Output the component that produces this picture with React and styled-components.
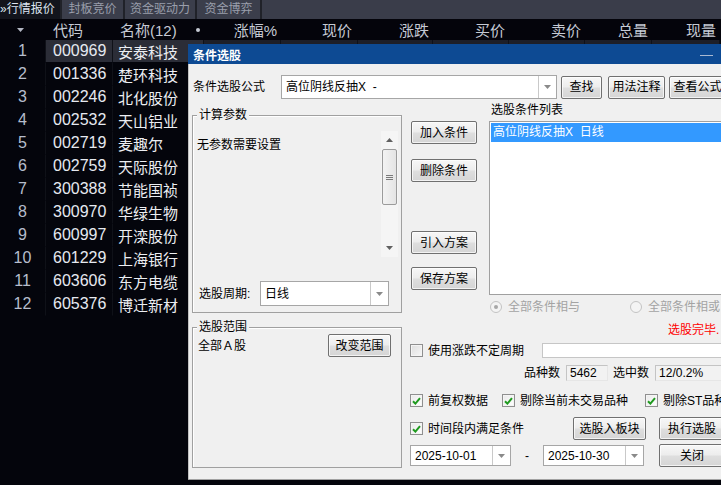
import React from "react";
import styled, { createGlobalStyle } from "styled-components";

const SANS = '"Liberation Sans", "Noto Sans CJK SC", sans-serif';

const GlobalStyle = createGlobalStyle`
  html, body { margin: 0; padding: 0; background: #04050c; overflow: hidden; }
  * { box-sizing: border-box; }
`;

const Screen = styled.div`
  position: relative;
  width: 721px;
  height: 485px;
  overflow: hidden;
  background: #04050c;
  font-family: ${SANS};
`;

/* ---------- market table ---------- */
const TabBar = styled.div`
  display: flex;
  height: 19px;
  background: #3a3d4a;
`;
const Tab = styled.div`
  width: ${(p) => p.$w}px;
  height: 19px;
  display: flex;
  align-items: center;
  justify-content: ${(p) => (p.$active ? "flex-start" : "center")};
  font-size: 12px;
  line-height: 19px;
  color: ${(p) => (p.$active ? "#dde4f0" : "#9a9eab")};
  background: ${(p) => (p.$active ? "#12141c" : "#3b3e4b")};
  border-right: 2px solid #202229;
  white-space: nowrap;
`;

const COLS = "46px 67px 91px 77px 77px 75px 76px 76px 67px 68px";

const HeaderRow = styled.div`
  display: grid;
  grid-template-columns: ${COLS};
  height: 21px;
  background: #04040b;
  color: #c6cad4;
  font-size: 15px;
`;
const HeadCell = styled.div`
  display: flex;
  align-items: center;
  justify-content: ${(p) => p.$justify || "flex-end"};
  padding: ${(p) => p.$pad || "0 4px 0 0"};
  white-space: nowrap;
`;
const Dot = styled.span`
  width: 4px;
  height: 4px;
  border-radius: 50%;
  background: #c6cad4;
`;

const DataRow = styled.div`
  display: grid;
  grid-template-columns: ${COLS};
  height: 23px;
`;
const Cell = styled.div`
  display: flex;
  align-items: center;
  justify-content: ${(p) => p.$justify || "flex-start"};
  padding-left: ${(p) => p.$pl || 0}px;
  font-size: ${(p) => p.$fs || 15}px;
  color: ${(p) => p.$color || "#eceef2"};
  background: ${(p) => p.$bg || "transparent"};
  border-right: 1px solid #0f1118;
  border-bottom: 1px solid ${(p) => (p.$bg ? "#04050c" : "transparent")};
  white-space: nowrap;
`;

/* ---------- dialog ---------- */
const Dialog = styled.div`
  position: absolute;
  left: 188px;
  top: 44px;
  width: 545px;
  height: 436px;
  display: flex;
  flex-direction: column;
  background: #f0f0f0;
  border-bottom: 1px solid #a2a2a2;
  font-family: ${SANS};
  font-size: 12px;
  color: #000;
`;
const TitleBar = styled.div`
  height: 20px;
  background: #0d4a93;
  display: flex;
  align-items: center;
  justify-content: space-between;
  padding: 0 20px 0 5px;
  color: #fff;
  font-size: 12px;
  font-weight: 600;
`;
const MinLine = styled.span`
  width: 13px;
  height: 1px;
  background: #a9b9d2;
  margin-top: 2px;
`;
const Body = styled.div`
  flex: 1;
  display: flex;
  flex-direction: column;
  padding: 11px 0 0 3px;
  border-left: 1px solid #c2c2c2;
`;
const Row = styled.div`
  display: flex;
  align-items: center;
  height: ${(p) => p.$h}px;
  margin-top: ${(p) => p.$mt || 0}px;
  padding-left: ${(p) => p.$pl || 0}px;
`;
const Label = styled.span`
  display: inline-block;
  width: ${(p) => (p.$w ? `${p.$w}px` : "auto")};
  margin-left: ${(p) => p.$ml || 0}px;
  margin-top: ${(p) => p.$mt || 0}px;
  padding-left: ${(p) => p.$pl || 0}px;
  line-height: 14px;
  color: ${(p) => p.$color || "#000"};
  white-space: pre;
  flex-shrink: 0;
`;

const ComboBox = styled.div`
  width: ${(p) => p.$w}px;
  height: ${(p) => p.$h}px;
  margin-left: ${(p) => p.$ml || 0}px;
  display: flex;
  background: #fff;
  border: 1px solid #a6a6a6;
  flex-shrink: 0;
`;
const ComboText = styled.div`
  flex: 1;
  display: flex;
  align-items: center;
  padding-left: 4px;
  white-space: pre;
  line-height: 14px;
`;
const ComboArrow = styled.div`
  width: 18px;
  display: flex;
  align-items: center;
  justify-content: center;
  border-left: 1px solid #c9c9c9;
`;

const Button = styled.button`
  width: ${(p) => p.$w}px;
  height: ${(p) => p.$h || 23}px;
  margin: ${(p) => p.$m || "0"};
  padding: 0;
  flex-shrink: 0;
  display: flex;
  align-items: center;
  justify-content: center;
  border: 1px solid #707070;
  border-radius: 2px;
  background: linear-gradient(#f7f7f7, #ededed 46%, #dedede 54%, #d5d5d5);
  box-shadow: inset 0 0 0 1px rgba(255, 255, 255, 0.7);
  font-family: ${SANS};
  font-size: 12px;
  line-height: 14px;
  color: #000;
`;

const Main = styled.div`
  display: flex;
  align-items: flex-start;
`;
const LeftCol = styled.div`
  width: 210px;
  flex-shrink: 0;
  display: flex;
  flex-direction: column;
  padding-top: 16px;
`;
const Group = styled.div`
  position: relative;
  height: ${(p) => p.$h}px;
  margin-top: ${(p) => p.$mt || 0}px;
  border: 1px solid #a0a0a0;
  box-shadow: inset 1px 1px 0 #ffffff;
`;
const Legend = styled.span`
  position: absolute;
  top: -8px;
  left: 4px;
  padding: 0 2px;
  background: #f0f0f0;
  line-height: 14px;
`;
const ParamArea = styled.div`
  display: flex;
  height: 126px;
  margin: 15px 3px 0 4px;
`;
const ParamText = styled.div`
  flex: 1;
  padding-top: 7px;
  line-height: 14px;
`;
const ScrollBar = styled.div`
  width: 17px;
  display: flex;
  flex-direction: column;
  background: #f5f5f5;
`;
const ScrollBtn = styled.div`
  height: 18px;
  display: flex;
  align-items: center;
  justify-content: center;
`;
const Thumb = styled.div`
  height: 56px;
  margin: 0 1px;
  display: flex;
  align-items: center;
  justify-content: center;
  border: 1px solid #9b9b9b;
  border-radius: 2px;
  background: linear-gradient(to right, #f3f3f3, #e4e4e4);
`;
const Track = styled.div`
  flex: 1;
`;

const ScopeRow = styled.div`
  display: flex;
  align-items: center;
  justify-content: space-between;
  height: 23px;
  margin: 6px 10px 0 5px;
`;

const RightCol = styled.div`
  flex: 1;
  margin-left: 8px;
  display: flex;
  flex-direction: column;
`;
const Upper = styled.div`
  display: flex;
`;
const BtnCol = styled.div`
  width: 67px;
  margin-left: 1px;
  padding-top: 22px;
  display: flex;
  flex-direction: column;
  flex-shrink: 0;
`;
const ListCol = styled.div`
  flex: 1;
  margin-left: 11px;
  display: flex;
  flex-direction: column;
`;
const ListBox = styled.div`
  height: 174px;
  margin-top: 4px;
  padding: 1px;
  background: #fff;
  border: 1px solid #a0a0a0;
`;
const ListItem = styled.div`
  height: 19px;
  line-height: 19px;
  padding-left: 2px;
  background: #3399ff;
  color: #fff;
  white-space: pre;
`;
const RadioItem = styled.div`
  width: ${(p) => (p.$w ? `${p.$w}px` : "auto")};
  display: flex;
  align-items: center;
  gap: 6px;
  color: #a3a3a3;
  line-height: 14px;
`;
const Radio = styled.span`
  width: 12px;
  height: 12px;
  border-radius: 50%;
  border: 1px solid #c3c3c3;
  background: #f4f4f4;
  display: flex;
  align-items: center;
  justify-content: center;
  &::after {
    content: "";
    width: 4px;
    height: 4px;
    border-radius: 50%;
    background: ${(p) => (p.$on ? "#a7a7a7" : "transparent")};
  }
`;
const Status = styled.div`
  margin-top: 9px;
  padding-left: 179px;
  line-height: 14px;
  color: #ff0000;
  white-space: nowrap;
`;

const CheckItem = styled.div`
  width: ${(p) => (p.$w ? `${p.$w}px` : "auto")};
  display: flex;
  align-items: center;
  gap: 5px;
  flex-shrink: 0;
  line-height: 14px;
  white-space: nowrap;
`;
const Box = styled.span`
  width: 13px;
  height: 13px;
  flex-shrink: 0;
  display: flex;
  align-items: center;
  justify-content: center;
  border: 1px solid #8f8f8f;
  background: ${(p) =>
    p.$disabled
      ? "linear-gradient(135deg, #dedede, #f7f7f7)"
      : "linear-gradient(135deg, #e9e9e9, #ffffff)"};
  box-shadow: inset 0 0 0 1px #f4f4f4;
`;
const TextField = styled.div`
  flex: 1;
  height: 15px;
  background: #fff;
  border: 1px solid #c6c6c6;
`;
const ReadField = styled.div`
  width: ${(p) => (p.$w ? `${p.$w}px` : "auto")};
  flex: ${(p) => (p.$w ? "none" : 1)};
  height: 16px;
  margin-left: ${(p) => p.$ml || 0}px;
  padding-left: 3px;
  display: flex;
  align-items: center;
  background: #f2f2f2;
  border: 1px solid #c4c4c4;
  border-right-color: #e6e6e6;
  border-bottom-color: #e6e6e6;
  line-height: 14px;
`;
const Dash = styled.span`
  width: 32px;
  text-align: center;
  line-height: 14px;
`;

const DownArrow = ({ color = "#8a8a8a" }) => (
  <svg width="7" height="4" viewBox="0 0 7 4">
    <path d="M0 0H7L3.5 4Z" fill={color} />
  </svg>
);
const UpArrow = () => (
  <svg width="7" height="4" viewBox="0 0 7 4">
    <path d="M0 4H7L3.5 0Z" fill="#606060" />
  </svg>
);
const Grip = () => (
  <svg width="7" height="5" viewBox="0 0 7 5">
    <path d="M0 0.5H7M0 2.5H7M0 4.5H7" stroke="#7a7a7a" strokeWidth="1" />
  </svg>
);
const Tick = () => (
  <svg width="9" height="8" viewBox="0 0 9 8">
    <path d="M1 4.2L3.4 6.6L8 1.2" fill="none" stroke="#1f9a1f" strokeWidth="2" />
  </svg>
);

const Combo = ({ w, h, ml, text }) => (
  <ComboBox $w={w} $h={h} $ml={ml}>
    <ComboText>{text}</ComboText>
    <ComboArrow>
      <DownArrow />
    </ComboArrow>
  </ComboBox>
);
const Check = ({ w, label, checked = true, disabled }) => (
  <CheckItem $w={w}>
    <Box $disabled={disabled}>{checked && <Tick />}</Box>
    <span>{label}</span>
  </CheckItem>
);

const rows = [
  ["1", "000969", "安泰科技"],
  ["2", "001336", "楚环科技"],
  ["3", "002246", "北化股份"],
  ["4", "002532", "天山铝业"],
  ["5", "002719", "麦趣尔"],
  ["6", "002759", "天际股份"],
  ["7", "300388", "节能国祯"],
  ["8", "300970", "华绿生物"],
  ["9", "600997", "开滦股份"],
  ["10", "601229", "上海银行"],
  ["11", "603606", "东方电缆"],
  ["12", "605376", "博迁新材"],
];

const heads = ["涨幅%", "现价", "涨跌", "买价", "卖价", "总量", "现量"];

export default function App() {
  return (
    <Screen>
      <GlobalStyle />
      <TabBar>
        <Tab $w={62} $active>
          »行情报价
        </Tab>
        <Tab $w={63}>封板竞价</Tab>
        <Tab $w={72}>资金驱动力</Tab>
        <Tab $w={65}>资金博弈</Tab>
      </TabBar>
      <HeaderRow>
        <HeadCell $justify="center" $pad="0 6px 0 0">
          <DownArrow color="#b4b8c4" />
        </HeadCell>
        <HeadCell $justify="flex-start" $pad="0 0 0 7px">
          代码
        </HeadCell>
        <HeadCell $justify="space-between" $pad="0 4px 0 7px">
          <span>名称(12)</span>
          <Dot />
        </HeadCell>
        {heads.map((h, i) => (
          <HeadCell key={h} $pad={i === 1 ? "0 6px 0 0" : "0 4px 0 0"}>
            {h}
          </HeadCell>
        ))}
      </HeaderRow>
      {rows.map(([n, code, name], i) => {
        const sel = i === 0;
        return (
          <DataRow key={code}>
            <Cell $justify="center" $color="#b6bdcc" $fs={16}>
              {n}
            </Cell>
            <Cell $pl={7} $fs={16} $color="#e6e9f0" $bg={sel ? "#2b2d37" : undefined}>
              {code}
            </Cell>
            <Cell $pl={5} $bg={sel ? "#2b2d37" : undefined}>
              {name}
            </Cell>
            {heads.map((h) => (
              <Cell key={h} $bg={sel ? "#1d1f28" : undefined} />
            ))}
          </DataRow>
        );
      })}

      <Dialog>
        <TitleBar>
          <span>条件选股</span>
          <MinLine />
        </TitleBar>
        <Body>
          <Row $h={24}>
            <Label $w={89} $pl={1}>
              条件选股公式
            </Label>
            <Combo w={276} h={24} text="高位阴线反抽X  -" />
            <Button $w={41} $m="0 0 0 4px">
              查找
            </Button>
            <Button $w={57} $m="0 0 0 6px">
              用法注释
            </Button>
            <Button $w={57} $m="0 0 0 4px">
              查看公式
            </Button>
          </Row>
          <Main>
            <LeftCol>
              <Group $h={198}>
                <Legend>计算参数</Legend>
                <ParamArea>
                  <ParamText>无参数需要设置</ParamText>
                  <ScrollBar>
                    <ScrollBtn>
                      <UpArrow />
                    </ScrollBtn>
                    <Thumb>
                      <Grip />
                    </Thumb>
                    <Track />
                    <ScrollBtn>
                      <DownArrow color="#606060" />
                    </ScrollBtn>
                  </ScrollBar>
                </ParamArea>
                <Row $h={25} $mt={24} $pl={6}>
                  <Label $w={61}>选股周期:</Label>
                  <Combo w={129} h={25} text="日线" />
                </Row>
              </Group>
              <Group $h={141} $mt={14}>
                <Legend>选股范围</Legend>
                <ScopeRow>
                  <Label>全部Ａ股</Label>
                  <Button $w={63}>改变范围</Button>
                </ScopeRow>
              </Group>
            </LeftCol>
            <RightCol>
              <Upper>
                <BtnCol>
                  <Button $w={66}>加入条件</Button>
                  <Button $w={66} $m="15px 0 0 0">
                    删除条件
                  </Button>
                  <Button $w={66} $m="49px 0 0 0">
                    引入方案
                  </Button>
                  <Button $w={66} $m="13px 0 0 0">
                    保存方案
                  </Button>
                </BtnCol>
                <ListCol>
                  <Label $pl={2} $mt={4}>
                    选股条件列表
                  </Label>
                  <ListBox>
                    <ListItem>高位阴线反抽X  日线</ListItem>
                  </ListBox>
                  <Row $h={14} $mt={5} $pl={1}>
                    <RadioItem $w={140}>
                      <Radio $on />
                      <span>全部条件相与</span>
                    </RadioItem>
                    <RadioItem>
                      <Radio />
                      <span>全部条件相或</span>
                    </RadioItem>
                  </Row>
                  <Status>选股完毕.</Status>
                </ListCol>
              </Upper>
              <Row $h={15} $mt={6}>
                <Check w={132} label="使用涨跌不定周期" checked={false} disabled />
                <TextField />
              </Row>
              <Row $h={16} $mt={7} $pl={114}>
                <Label>品种数</Label>
                <ReadField $w={42} $ml={6}>
                  5462
                </ReadField>
                <Label $ml={5}>选中数</Label>
                <ReadField $ml={6}>12/0.2%</ReadField>
              </Row>
              <Row $h={13} $mt={13}>
                <Check w={92} label="前复权数据" />
                <Check w={143} label="剔除当前未交易品种" />
                <Check label="剔除ST品种" />
              </Row>
              <Row $h={23} $mt={10}>
                <Check w={163} label="时间段内满足条件" />
                <Button $w={73}>选股入板块</Button>
                <Button $w={66} $m="0 0 0 13px">
                  执行选股
                </Button>
              </Row>
              <Row $h={23} $mt={4}>
                <Combo w={101} h={21} text="2025-10-01" />
                <Dash>-</Dash>
                <Combo w={101} h={21} text="2025-10-30" />
                <Button $w={66} $m="0 0 0 15px">
                  关闭
                </Button>
              </Row>
            </RightCol>
          </Main>
        </Body>
      </Dialog>
    </Screen>
  );
}
